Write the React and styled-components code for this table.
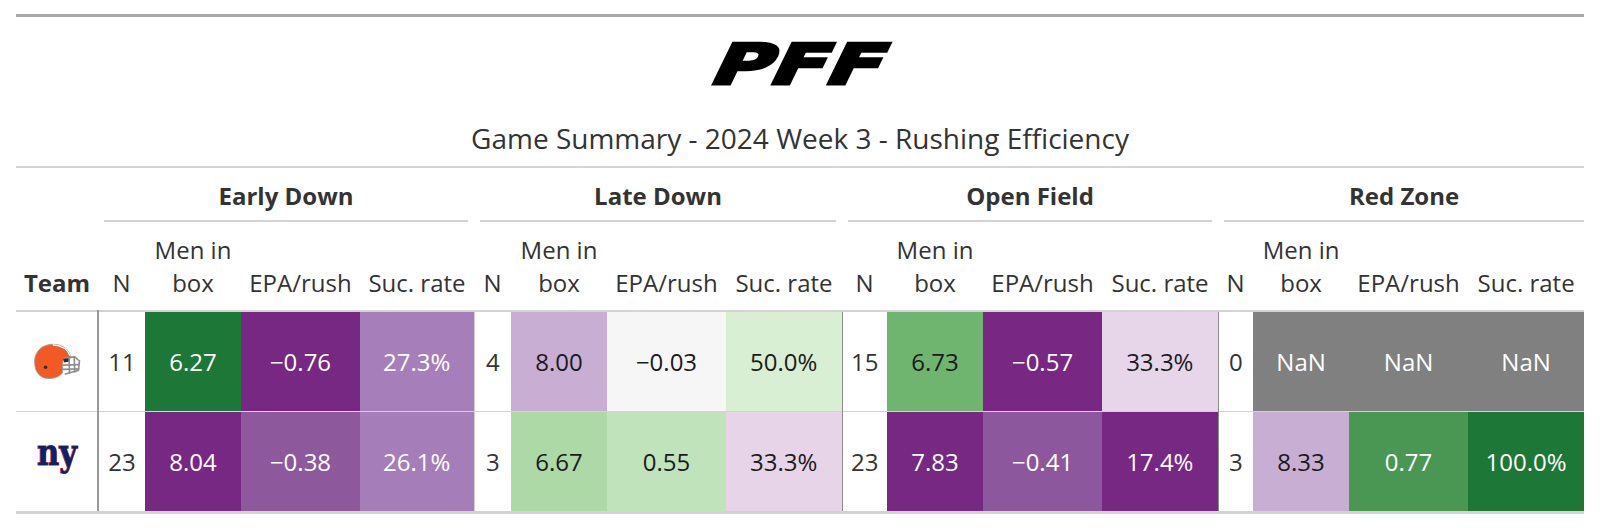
import React from 'react';
import styled, {createGlobalStyle} from 'styled-components';

const GlobalStyle = createGlobalStyle`
    body {
        margin: 0;
        background: #fff;
        font-family: "Open Sans", "Noto Sans", sans-serif;
    }
`

const Page = styled.div`
    padding: 14px 16px 0;
`

const Card = styled.div`
    border-top: 3px solid #a8a8a8;
    width: 1568px;
`

const Heading = styled.div`
    display: flex;
    flex-direction: column;
    align-items: center;
    padding-top: 22px;
    border-bottom: 2px solid #d3d3d3;
`

const LogoBox = styled.div`
    margin-left: 2px;
    height: 46px;
`

const Title = styled.div`
    margin-top: 35px;
    padding-bottom: 10px;
    font-size: 28px;
    line-height: 36px;
    color: #333;
`

const Table = styled.table`
    width: 1568px;
    border-collapse: collapse;
    table-layout: fixed;
    color: #333;
    font-size: 24px;
`

const SpannerCell = styled.th`
    padding: 12px ${p => p.last ? 0 : 6}px 0 6px;
    font-weight: 700;
`

const SpannerLabel = styled.div`
    line-height: 31px;
    padding-bottom: 9px;
    border-bottom: 2px solid #d3d3d3;
`

const LabelRow = styled.tr`
    border-bottom: 2px solid #d3d3d3;
`

const Label = styled.th`
    padding: 11px 3px 11px;
    font-weight: ${p => p.bold ? 700 : 400};
    line-height: 33px;
    vertical-align: bottom;
    white-space: nowrap;
    text-align: center;
`

const BodyRow = styled.tr`
    border-bottom: ${p => p.last ? '3px solid #d3d3d3' : '1px solid #d3d3d3'};
`

const TeamCell = styled.td`
    height: 99px;
    padding: 0;
    text-align: center;
    vertical-align: middle;
    border-right: 2px solid #999;

    svg {
        display: block;
        margin: 0 auto;
    }
`

const NCell = styled.td`
    padding: 0;
    text-align: center;
    vertical-align: middle;
    color: #333;
    border-left: ${p => p.sep || 'none'};
`

const ValueCell = styled.td`
    padding: 0;
    text-align: center;
    vertical-align: middle;
    background: ${p => p.bg};
    color: ${p => p.dark ? '#fff' : '#1a1a1a'};
`

const widths = [82, 47, 96, 119, 114, 37, 96, 119, 116, 45, 96, 119, 116, 35, 96, 119, 116]

const groups = ['Early Down', 'Late Down', 'Open Field', 'Red Zone']
// separator drawn left of each group's N column
const seps = ['none', '1px solid #d3d3d3', '1px solid #8c8c8c', '1px solid #8c8c8c']

const rows = [
    {
        team: 'CLE',
        groups: [
            {n: 11, cells: [['6.27', '#1d7837', 1], ['\u22120.76', '#772882', 1], ['27.3%', '#a57eba', 1]]},
            {n: 4, cells: [['8.00', '#c9aed4', 0], ['\u22120.03', '#f6f6f6', 0], ['50.0%', '#d9efd3', 0]]},
            {n: 15, cells: [['6.73', '#6fb56f', 0], ['\u22120.57', '#782883', 1], ['33.3%', '#e7d6ea', 0]]},
            {n: 0, cells: [['NaN', '#808080', 1], ['NaN', '#808080', 1], ['NaN', '#808080', 1]]}
        ]
    },
    {
        team: 'NYG',
        groups: [
            {n: 23, cells: [['8.04', '#772882', 1], ['\u22120.38', '#8d589c', 1], ['26.1%', '#a47db9', 1]]},
            {n: 3, cells: [['6.67', '#acd9a5', 0], ['0.55', '#c1e3bb', 0], ['33.3%', '#e7d4e8', 0]]},
            {n: 23, cells: [['7.83', '#772882', 1], ['\u22120.41', '#8d579e', 1], ['17.4%', '#772882', 1]]},
            {n: 3, cells: [['8.33', '#c9aed4', 0], ['0.77', '#4a9753', 1], ['100.0%', '#1d7837', 1]]}
        ]
    }
]

const PffLogo = () => (
    <svg width="192" height="46" viewBox="0 -3 192 46" overflow="visible">
        <text
            x="22" y="42"
            textLength="170" lengthAdjust="spacingAndGlyphs"
            transform="skewX(-26)" fill="#000" stroke="#000" strokeWidth="3"
            style={{fontFamily: '"DejaVu Sans", sans-serif', fontWeight: 700, fontSize: 56}}
        >PFF</text>
    </svg>
)

const Helmet = () => (
    <svg width="48" height="37" viewBox="0 0 46 34">
        <path d="M1.5 17.5 C1.5 6.5 9.5 0.5 19 0.5 C28.5 0.5 34.5 5.5 36 12.5 L30.5 14.5 C28.8 15.5 28.2 18.5 28.5 22 L28.2 28 C24.5 32.5 18 34 12 33 C5.5 31.8 1.5 25.5 1.5 17.5 Z"
            fill="#f15a24" stroke="#a0a0a0" strokeWidth="0.8"/>
        <path d="M19 1 C27 1.5 33 5 35.5 11.5" fill="none" stroke="#fff" strokeWidth="1.3"/>
        <circle cx="12" cy="22.5" r="1.7" fill="#3a2a20"/>
        <path d="M29 14.5 L32 12.8 L36 12.8 L35 17 L30 18 Z" fill="#2b2b2b"/>
        <g fill="none" stroke="#8f8f8f" strokeWidth="1.6" strokeLinecap="round">
            <path d="M30 13.5 L40 12.5 L44.5 16.5 L43.5 25.5 L31 29"/>
            <path d="M29 20.5 L44 20"/>
            <path d="M34.5 13 L35 28"/>
            <path d="M39.5 12.5 L40 27"/>
            <path d="M28.5 24.5 L43.8 24"/>
        </g>
    </svg>
)

const GiantsLogo = () => (
    <svg width="44" height="36" viewBox="0 0 44 36" overflow="visible">
        <text
            x="2" y="20.5"
            textLength="40" lengthAdjust="spacingAndGlyphs"
            fill="#0b2265" stroke="#a71930" strokeWidth="1.2"
            paintOrder="stroke"
            style={{fontFamily: '"DejaVu Serif", serif', fontWeight: 700, fontSize: 37}}
        >ny</text>
    </svg>
)

const logos = {CLE: <Helmet/>, NYG: <GiantsLogo/>}

export default function App() {
    return (
        <Page>
            <GlobalStyle/>
            <Card>
                <Heading>
                    <LogoBox><PffLogo/></LogoBox>
                    <Title>Game Summary - 2024 Week 3 - Rushing Efficiency</Title>
                </Heading>
                <Table>
                    <colgroup>
                        {widths.map((w, i) => <col key={i} style={{width: w}}/>)}
                    </colgroup>
                    <thead>
                        <tr>
                            <th/>
                            {groups.map((g, i) => (
                                <SpannerCell key={g} colSpan={4} last={i === groups.length - 1}>
                                    <SpannerLabel>{g}</SpannerLabel>
                                </SpannerCell>
                            ))}
                        </tr>
                        <LabelRow>
                            <Label bold>Team</Label>
                            {groups.map(g => (
                                <React.Fragment key={g}>
                                    <Label>N</Label>
                                    <Label>Men in<br/>box</Label>
                                    <Label>EPA/rush</Label>
                                    <Label>Suc. rate</Label>
                                </React.Fragment>
                            ))}
                        </LabelRow>
                    </thead>
                    <tbody>
                        {rows.map((row, r) => (
                            <BodyRow key={row.team} last={r === rows.length - 1}>
                                <TeamCell>{logos[row.team]}</TeamCell>
                                {row.groups.map((grp, g) => (
                                    <React.Fragment key={g}>
                                        <NCell sep={seps[g]}>{grp.n}</NCell>
                                        {grp.cells.map(([v, bg, dark], c) => (
                                            <ValueCell key={c} bg={bg} dark={dark}>{v}</ValueCell>
                                        ))}
                                    </React.Fragment>
                                ))}
                            </BodyRow>
                        ))}
                    </tbody>
                </Table>
            </Card>
        </Page>
    )
}
